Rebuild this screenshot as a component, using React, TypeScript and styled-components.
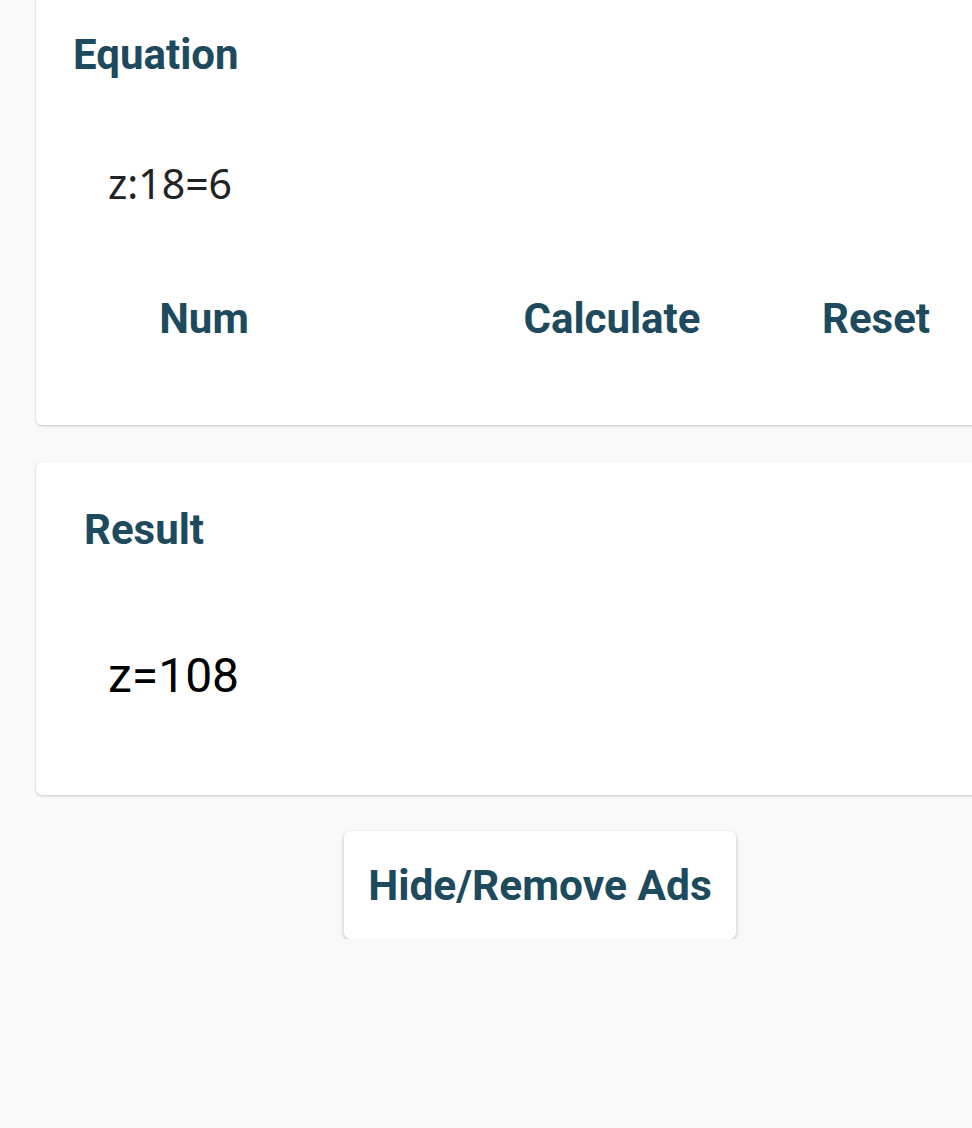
import React from 'react'
import styled, { createGlobalStyle } from 'styled-components'

const GlobalStyle = createGlobalStyle`
    html, body {
        margin: 0;
        padding: 0;
        background: #f9f9f9;
        overflow: hidden;
    }
    body {
        font-family: Roboto, "Liberation Sans", sans-serif;
    }
`

const heading = '#1d4a5c'

const App = () => {
    return (
        <Page>
            <GlobalStyle />
            <Card top={-20} padTop={45} padBottom={76}>
                <Title indent={37}>Equation</Title>
                <Equation>z:18=6</Equation>
                <ButtonRow>
                    <TextButton width={264} offset={36}>Num</TextButton>
                    <TextButton width={264} offset={144}>Calculate</TextButton>
                    <TextButton width={200} offset={32}>Reset</TextButton>
                </ButtonRow>
            </Card>
            <Card top={37} padTop={38} padBottom={89}>
                <Title indent={48}>Result</Title>
                <Answer>z=108</Answer>
            </Card>
            <AdsButton>Hide/Remove Ads</AdsButton>
        </Page>
    )
}

export default App

const Page = styled.main`
    width: 1008px;
    margin-left: 36px;
    display: flex;
    flex-direction: column;
`

interface CardProps {
    top: number
    padTop: number
    padBottom: number
}

const Card = styled.section<CardProps>`
    margin-top: ${({ top }) => top}px;
    padding-top: ${({ padTop }) => padTop}px;
    padding-bottom: ${({ padBottom }) => padBottom}px;
    background: #fff;
    border-radius: 6px;
    box-shadow: 0 1px 3px rgba(0, 0, 0, 0.2), 0 0 1px rgba(0, 0, 0, 0.08);
`

const Title = styled.h2<{ indent: number }>`
    margin: 0;
    padding-left: ${({ indent }) => indent}px;
    font-size: 42px;
    line-height: 60px;
    font-weight: 700;
    color: ${heading};
`

const Equation = styled.div`
    margin-top: 68px;
    padding-left: 72px;
    font-family: "Noto Sans", Roboto, sans-serif;
    font-size: 41px;
    line-height: 60px;
    color: #222;
`

const ButtonRow = styled.div`
    margin-top: 76px;
    display: flex;
`

const TextButton = styled.button<{ width: number; offset: number }>`
    width: ${({ width }) => width}px;
    margin-left: ${({ offset }) => offset}px;
    padding: 0;
    border: none;
    background: none;
    font-family: Roboto, sans-serif;
    font-size: 42px;
    line-height: 60px;
    font-weight: 700;
    color: ${heading};
    text-align: center;
`

const Answer = styled.div`
    margin-top: 86px;
    padding-left: 72px;
    font-family: Roboto, sans-serif;
    font-size: 48px;
    line-height: 60px;
    color: #000;
`

const AdsButton = styled.button`
    align-self: center;
    margin-top: 36px;
    width: 392px;
    height: 108px;
    padding: 0;
    border: none;
    border-radius: 6px;
    background: #fff;
    box-shadow: 0 2px 4px rgba(0, 0, 0, 0.22), 0 0 1px rgba(0, 0, 0, 0.1);
    font-family: Roboto, sans-serif;
    font-size: 42.5px;
    font-weight: 700;
    color: ${heading};
`
